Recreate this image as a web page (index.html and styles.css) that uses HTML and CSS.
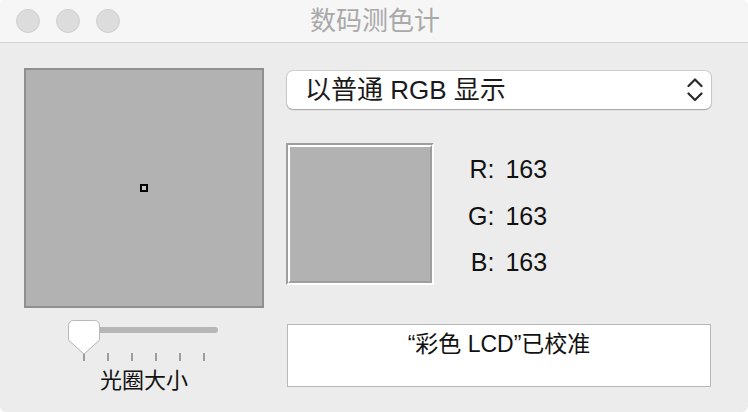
FILE: index.html
```html
<!DOCTYPE html>
<html lang="zh-CN">
<head>
<meta charset="utf-8">
<title>数码测色计</title>
<link rel="stylesheet" href="styles.css">
</head>
<body>
<div class="window">
  <header class="titlebar">
    <div class="lights">
      <span class="light"></span>
      <span class="light"></span>
      <span class="light"></span>
    </div>
    <div class="title">数码测色计</div>
  </header>
  <main class="content">
    <section class="left">
      <div class="preview"><span class="aperture"></span></div>
      <div class="slider">
        <div class="track"></div>
        <svg class="knob" width="34" height="36" viewBox="0 0 34 36">
          <path d="M1.5 6.5 A5 5 0 0 1 6.5 1.5 H27.5 A5 5 0 0 1 32.5 6.5 V21 L17 35 L1.5 21 Z" fill="#ffffff" stroke="#b9b9b9" stroke-width="1"/>
        </svg>
        <div class="ticks">
          <span class="tick"></span><span class="tick"></span><span class="tick"></span>
          <span class="tick"></span><span class="tick"></span><span class="tick"></span>
        </div>
      </div>
      <div class="slider-label">光圈大小</div>
    </section>
    <section class="right">
      <div class="popup">
        <span class="popup-text">以普通 RGB 显示</span>
        <svg class="chevrons" width="16" height="26" viewBox="0 0 16 26">
          <path d="M1.5 9 L8 2.5 L14.5 9" fill="none" stroke="#2a2a2a" stroke-width="2.2" stroke-linecap="round" stroke-linejoin="round"/>
          <path d="M1.5 16.5 L8 23 L14.5 16.5" fill="none" stroke="#2a2a2a" stroke-width="2.2" stroke-linecap="round" stroke-linejoin="round"/>
        </svg>
      </div>
      <div class="sample-row">
        <div class="swatch-outer"><div class="swatch"></div></div>
        <div class="values">
          <span class="lbl">R:</span><span class="num">163</span>
          <span class="lbl">G:</span><span class="num">163</span>
          <span class="lbl">B:</span><span class="num">163</span>
        </div>
      </div>
      <div class="status">“彩色 LCD”已校准</div>
    </section>
  </main>
</div>
</body>
</html>
```
FILE: styles.css
```css
html, body {
  margin: 0;
  padding: 0;
  background: #ffffff;
}

body {
  font-family: "Liberation Sans", "Noto Sans CJK SC", sans-serif;
  color: #111;
}

.window {
  width: 748px;
  height: 412px;
  background: #ececec;
  border-radius: 6px;
  overflow: hidden;
  display: flex;
  flex-direction: column;
}

.titlebar {
  position: relative;
  height: 42px;
  flex: 0 0 42px;
  background: #f6f6f6;
  border-bottom: 1px solid #d2d2d2;
  display: flex;
  align-items: center;
  justify-content: center;
}

.lights {
  position: absolute;
  left: 16px;
  top: 9px;
  display: flex;
  gap: 16px;
}

.light {
  width: 22px;
  height: 22px;
  border-radius: 50%;
  background: #dcdcdc;
  border: 1px solid #d0d0d0;
}

.title {
  font-size: 26px;
  line-height: 42px;
  color: #a9a9a9;
  margin-left: 2px;
}

.content {
  display: flex;
  padding: 25px 0 0 24px;
  gap: 23px;
}

.left {
  width: 240px;
  display: flex;
  flex-direction: column;
}

.preview {
  width: 236px;
  height: 236px;
  border: 2px solid #8f8f8f;
  background: #b2b2b2;
  display: flex;
  align-items: center;
  justify-content: center;
}

.aperture {
  width: 4px;
  height: 4px;
  border: 2px solid #000;
  background: #c8c8c8;
}

.slider {
  position: relative;
  width: 152px;
  height: 42px;
  margin: 11px 0 0 43px;
}

.track {
  margin: 8px 0 0 8px;
  width: 143px;
  height: 6px;
  border-radius: 3px;
  background: #b6b6b6;
}

.knob {
  position: absolute;
  left: 0;
  top: 0;
  filter: drop-shadow(0 0.5px 0.5px rgba(0,0,0,0.15));
}

.ticks {
  display: flex;
  gap: 22px;
  padding-left: 16px;
  margin-top: 20px;
}

.tick {
  width: 2px;
  height: 8px;
  background: #9c9c9c;
}

.slider-label {
  text-align: center;
  font-size: 22px;
  line-height: 26px;
  margin-top: 7px;
}

.right {
  width: 424px;
  display: flex;
  flex-direction: column;
}

.popup {
  margin-top: 3px;
  height: 38px;
  background: #fff;
  border-radius: 6px;
  box-shadow: 0 0 0 1px rgba(0,0,0,0.12), 0 1px 1.5px rgba(0,0,0,0.22);
  display: flex;
  align-items: center;
  justify-content: space-between;
  padding: 0 8px 0 18px;
}

.popup-text {
  font-size: 26px;
  line-height: 38px;
  color: #1a1a1a;
}

.sample-row {
  display: flex;
  margin-top: 34px;
  margin-left: -1px;
}

.swatch-outer {
  width: 144px;
  height: 138px;
  border: 2px solid;
  border-color: #9e9e9e #ffffff #ffffff #9e9e9e;
}

.swatch {
  width: 140px;
  height: 134px;
  border: 2px solid;
  border-color: #ffffff #9e9e9e #9e9e9e #ffffff;
  background: #b2b2b2;
}

.values {
  display: grid;
  grid-template-columns: auto auto;
  column-gap: 11px;
  align-content: start;
  margin: 3px 0 0 34px;
  font-size: 25px;
  line-height: 46.5px;
  color: #111;
}

.lbl {
  justify-self: end;
}

.status {
  margin-top: 38px;
  height: 55px;
  background: #fff;
  border: 1px solid #b8b8b8;
  text-align: center;
  font-size: 23px;
  line-height: 26px;
  padding-top: 6px;
}
```
